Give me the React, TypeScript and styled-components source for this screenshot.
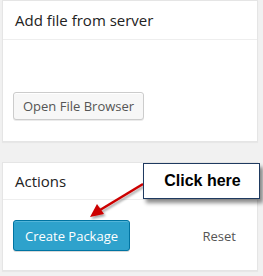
import React from "react";
import styled, { createGlobalStyle } from "styled-components";

const Global = createGlobalStyle`
  html, body { margin: 0; padding: 0; background: #f1f1f1; }
  body { font-family: "Open Sans", "Noto Sans", sans-serif; width: 263px; height: 276px; overflow: hidden; }
`;

const Page = styled.div`
  position: relative;
  width: 263px;
  height: 276px;
  padding-left: 2px;
  box-sizing: border-box;
`;

const Panel = styled.div<{ $top: number }>`
  width: 256px;
  box-sizing: border-box;
  background: #fff;
  border: 1px solid #e5e5e5;
  box-shadow: 0 1px 1px rgba(0, 0, 0, 0.04);
  margin-top: ${(p) => p.$top}px;
`;

const Header = styled.div<{ $h: number }>`
  height: ${(p) => p.$h}px;
  box-sizing: border-box;
  border-bottom: 1px solid #eee;
  display: flex;
  align-items: center;
  padding-left: 12px;
  font-size: 15px;
  color: #222;
`;

const Body = styled.div<{ $pt: number; $pb: number }>`
  padding: ${(p) => p.$pt}px 12px ${(p) => p.$pb}px 10px;
  display: flex;
  align-items: center;
  justify-content: space-between;
`;

const Button = styled.button`
  font-family: "Open Sans", "Noto Sans", sans-serif;
  font-size: 13px;
  height: 28px;
  padding: 0 9px;
  border-radius: 3px;
  border: 1px solid #ccc;
  background: #f7f7f7;
  color: #555;
  box-shadow: inset 0 1px 0 #fff, 0 1px 0 rgba(0, 0, 0, 0.08);
  cursor: pointer;
`;

const PrimaryButton = styled(Button)`
  height: 31px;
  padding: 0 11px;
  background: #2ea2cc;
  border-color: #0074a2;
  color: #fff;
  box-shadow: inset 0 1px 0 rgba(120, 200, 230, 0.5), 0 1px 0 rgba(0, 0, 0, 0.15);
`;

const ResetLink = styled.span`
  font-size: 13px;
  color: #555;
  margin-right: 9px;
`;

const Callout = styled.div`
  position: absolute;
  left: 143px;
  top: 163px;
  width: 117px;
  height: 36px;
  box-sizing: border-box;
  background: #fff;
  border: 1px solid #1f3a60;
  box-shadow: 3px 4px 4px rgba(0, 0, 0, 0.45);
  display: flex;
  align-items: center;
  justify-content: center;
  font-family: "Liberation Sans", Arial, sans-serif;
  font-weight: bold;
  font-size: 16px;
  color: #000;
  padding-left: 2px;
`;

const Arrow = styled.svg`
  position: absolute;
  left: 80px;
  top: 175px;
  overflow: visible;
`;

export default function App() {
  return (
    <>
      <Global />
      <Page>
        <Panel $top={0}>
          <Header $h={39}>Add file from server</Header>
          <Body $pt={52} $pb={21}>
            <Button>Open File Browser</Button>
          </Body>
        </Panel>
        <Panel $top={20}>
          <Header $h={37}>Actions</Header>
          <Body $pt={20} $pb={19}>
            <PrimaryButton>Create Package</PrimaryButton>
            <ResetLink>Reset</ResetLink>
          </Body>
        </Panel>
        <Arrow width="70" height="50" viewBox="0 0 70 50">
          <defs>
            <filter id="sh" x="-20%" y="-20%" width="160%" height="160%">
              <feDropShadow dx="1.5" dy="2" stdDeviation="1.2" floodColor="#000" floodOpacity="0.35" />
            </filter>
          </defs>
          <g filter="url(#sh)">
            <line x1="63" y1="9" x2="20" y2="35" stroke="#cc0000" strokeWidth="2.5" />
            <polygon points="10,42 17,29 24,39" fill="#cc0000" />
          </g>
        </Arrow>
        <Callout>Click here</Callout>
      </Page>
    </>
  );
}
